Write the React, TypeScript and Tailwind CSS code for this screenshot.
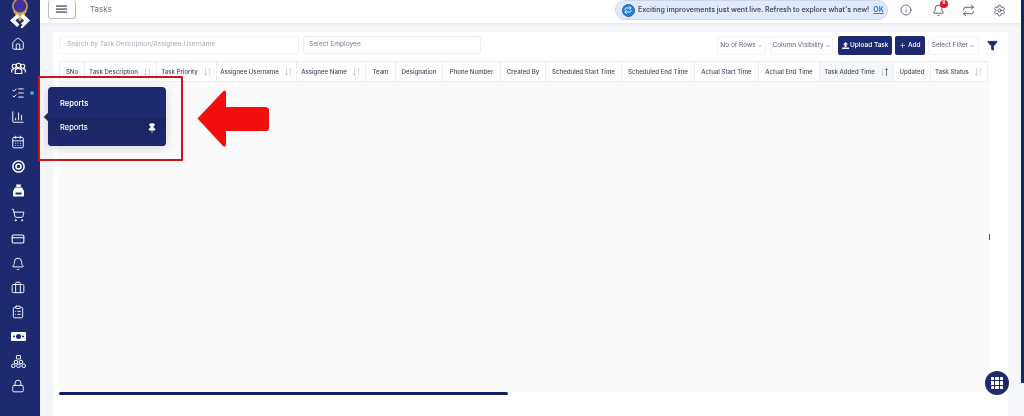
import React from "react";
import {
  Home, ListChecks, ChartColumn, CalendarDays, ShoppingCart, CreditCard, Bell, Briefcase, ClipboardList, Lock, Info, Repeat, Settings, Pin, Funnel, Plus, ChevronDown,
} from "lucide-react";

const S = 14;
const Users3 = () => (
  <svg width="15" height="13" viewBox="0 0 15 13" fill="none" stroke="currentColor" strokeWidth="1.1">
    <circle cx="3.2" cy="4.2" r="2" /><circle cx="7.5" cy="3.4" r="2.2" /><circle cx="11.8" cy="4.2" r="2" />
    <path d="M.7 10.500V8.800c0-1 1-1.900 2.400-1.900M4.200 11.500V8.800c0-1.300 1.400-2.400 3.300-2.400s3.300 1.100 3.300 2.400v2.700zM14.300 10.500V8.800c0-1-1-1.900-2.400-1.900" />
  </svg>
);
const Target = () => (
  <svg width="13" height="13" viewBox="0 0 13 13" fill="none" stroke="currentColor">
    <circle cx="6.500" cy="6.500" r="5.600" strokeWidth="1.500" /><circle cx="6.500" cy="6.500" r="2.500" strokeWidth="1.500" />
  </svg>
);
const Bag = () => (
  <svg width="13" height="13" viewBox="0 0 13 13" fill="currentColor">
    <path d="M4 0.500h5l-.5 2.500h-4zM3 3.500h7l2 3.500v4.500c0 .6-.4 1-1 1H2c-.6 0-1-.4-1-1V7z" />
    <rect x="3.500" y="8.500" width="6" height="2" fill="#1d2a6f" />
  </svg>
);
const Money = () => (
  <svg width="15" height="9" viewBox="0 0 15 9" fill="currentColor">
    <path fillRule="evenodd" d="M0 1c0-.5.500-1 1-1h13c.5 0 1 .500 1 1v7c0 .5-.5 1-1 1H1c-.5 0-1-.5-1-1zM7.500 2a2.500 2.500 0 100 5 2.500 2.500 0 000-5zM3 3.500a1 1 0 100 2 1 1 0 000-2zM12 3.500a1 1 0 100 2 1 1 0 000-2z" />
  </svg>
);
const Org = () => (
  <svg width="15" height="13" viewBox="0 0 15 13" fill="none" stroke="currentColor" strokeWidth="1">
    <rect x="5.500" y=".5" width="4" height="3.500" rx=".6" />
    <circle cx="5" cy="7" r="1.800" /><circle cx="10" cy="7" r="1.800" />
    <circle cx="2.300" cy="10.800" r="1.800" /><circle cx="7.500" cy="10.800" r="1.800" /><circle cx="12.700" cy="10.800" r="1.800" />
  </svg>
);

const sideIcons: React.ReactNode[] = [
  <Home size={S} strokeWidth={1.6} />, <Users3 />, <ListChecks size={S} strokeWidth={1.6} />, <ChartColumn size={S} strokeWidth={1.6} />,
  <CalendarDays size={S} strokeWidth={1.6} />, <Target />, <Bag />, <ShoppingCart size={S} strokeWidth={1.6} />,
  <CreditCard size={S} strokeWidth={1.8} />, <Bell size={S} strokeWidth={1.6} />, <Briefcase size={S} strokeWidth={1.6} />,
  <ClipboardList size={S} strokeWidth={1.6} />, <Money />, <Org />, <Lock size={S} strokeWidth={1.6} />,
];

const cols: [string, number, boolean][] = [
  ["SNo", 26, false], ["Task Description", 72, true], ["Task Priority", 60, true], ["Assignee Username", 80, true],
  ["Assignee Name", 69, true], ["Team", 30, false], ["Designation", 47, false], ["Phone Number", 58, false], ["Created By", 45, false],
  ["Scheduled Start Time", 76, false], ["Scheduled End Time", 73, false], ["Actual Start Time", 64, false], ["Actual End Time", 61, false],
  ["Task Added Time", 74, true], ["Updated", 37, false], ["Task Status", 57, true],
];

const Sort = ({ active }: { active?: boolean }) => (
  <svg width="9" height="8" viewBox="0 0 9 8" fill="none" strokeWidth=".8" className="ml-[5px] shrink-0">
    <path d="M2.500 0v7.300M1 5.800l1.500 1.600L4 5.800" stroke="#c4c7cf" />
    <path d="M6.500 8V.7M5 2.200L6.500.6 8 2.200" stroke={active ? "#4b5563" : "#d5d7dd"} />
  </svg>
);

const Ghost = ({ children, w }: { children: React.ReactNode; w: string }) => (
  <div className={`${w} h-[19px] flex items-center justify-center gap-[1px] bg-white rounded-[3px] border border-[#f1f2f5] text-[6.500px] text-[#5a6080]`}>
    {children}<ChevronDown size={6} strokeWidth={2} />
  </div>
);

export default function App() {
  return (
    <div className="relative flex w-[1024px] h-[416px] overflow-hidden bg-[#f4f5f8] blur-[0.35px]" style={{ fontFamily: "Inter, 'Liberation Sans', sans-serif" }}>
      <aside className="w-[40px] shrink-0 flex flex-col items-center text-white bg-[#1d2a6f]">
        <div className="h-[32px] w-full flex justify-center shrink-0">
          <svg width="30" height="32" viewBox="0 0 30 32">
            <path d="M15 22 L8 11 A8.500 8.500 0 0 1 22 11 Z" fill="#c9a24a" />
            <circle cx="15" cy="6" r="7.200" fill="#46309a" stroke="#c9a24a" strokeWidth="1.500" />
            <path d="M5 20.500L12 14l2.500 2.500-4 4 4 4-2.500 2.500z" fill="#fff" />
            <path d="M25 20.500L18 13.500l-3 3 4 4-3 3 1.500 1.500-2 2 1.500 1.500z" fill="#fff" />
          </svg>
        </div>
        {sideIcons.map((ic, i) => (
          <div key={i} className="relative h-[24.400px] w-full shrink-0 flex items-center justify-center pr-[4px]">
            {ic}
            {i === 2 && <span className="absolute left-[30px] top-[10px] w-[4px] h-[4px] rounded-full bg-[#2aa7c9]" />}
          </div>
        ))}
      </aside>

      <div className="flex-1 flex flex-col min-w-0">
        <header className="h-[23px] shrink-0 bg-white shadow-[0_1px_4px_rgba(0,0,0,0.08)] flex items-start pl-[8px] z-10">
          <button className="w-[28px] h-[19px] border border-[#b9bcc4] rounded-[3px] flex items-center justify-center border-t-0">
            <svg width="12" height="8" viewBox="0 0 12 8" fill="#2b3352"><rect width="11" height="1.100" y=".5" /><rect width="11" height="1.100" y="3.500" /><rect width="11" height="1.100" y="6.500" /></svg>
          </button>
          <span className="ml-[14px] mt-[3px] text-[8px] leading-[12px] text-[#6b7280]">Tasks</span>
          <div className="ml-[503px] w-[273px] h-[20px] rounded-full bg-[#e0eafa] border border-[#c9d8f1] flex items-center pl-[6px] text-[7px] whitespace-nowrap font-semibold text-[#4a5060] shrink-0">
            <span className="w-[13px] h-[13px] rounded-full bg-[#2f7fd6] border border-[#1e62b5] flex items-center justify-center shrink-0 mr-[3px]">
              <Repeat size={8} strokeWidth={2.500} color="#fff" />
            </span>
            <span>Exciting improvements just went live. Refresh to explore what's new!</span>
            <span className="ml-[4px] text-[#2f7fd6] underline font-bold">OK</span>
          </div>
          <div className="flex items-center h-[20px] text-[#3a4058] shrink-0">
            <Info size={12} className="ml-[12px]" strokeWidth={1.500} />
            <span className="relative ml-[20px] flex"><Bell size={13} strokeWidth={1.500} />
              <span className="absolute -right-[3px] -top-[4px] w-[8px] h-[8px] rounded-full bg-[#e5141f] text-[4.500px] text-white flex items-center justify-center font-bold">6</span>
            </span>
            <Repeat size={13} className="ml-[17px]" strokeWidth={1.500} />
            <Settings size={13} className="ml-[18px]" strokeWidth={1.500} />
          </div>
        </header>

        <div className="flex-1 flex pt-[9px] pl-[13px] min-h-0">
          <main className="w-[955px] h-[384px] bg-white flex flex-col pl-[6px] pr-[6px] pt-[4px]">
            <div className="flex h-[19px] items-start shrink-0">
              <div className="w-[240px] h-[18px] border border-[#f0f1f4] rounded-[3px] flex items-center pl-[7px] text-[6.500px] text-[#a8abb5]">Search by Task Description/Assignee Username</div>
              <div className="ml-[4px] w-[178px] h-[18px] border border-[#eceef1] rounded-[3px] flex items-center pl-[5px] text-[6.600px] text-[#777c88]">Select Employee</div>
              <div className="ml-auto flex">
                <Ghost w="w-[49px]">No of Rows</Ghost>
                <div className="ml-[4px]"><Ghost w="w-[63px]">Column Visibility</Ghost></div>
                <div className="ml-[5px] w-[54px] h-[19px] bg-[#1d2a6f] rounded-[2px] flex items-center justify-center gap-[1.500px] text-white text-[6.500px] font-medium">
                  <svg width="7" height="7" viewBox="0 0 7 7" fill="#fff"><path d="M3.500 0L6 2.500H4.500V5h-2V2.500H1zM0 5.500h7V7H0z" /></svg>
                  Upload Task
                </div>
                <div className="ml-[3px] w-[30px] h-[19px] bg-[#1d2a6f] rounded-[2px] flex items-center justify-center gap-[1.500px] text-white text-[6.500px] font-medium"><Plus size={7} strokeWidth={2} />Add</div>
                <div className="ml-[3px]"><Ghost w="w-[51px]">Select Filter</Ghost></div>
                <div className="ml-[3px] w-[20px] h-[19px] flex items-center justify-center"><Funnel size={11} fill="#1d2a6f" color="#1d2a6f" /></div>
              </div>
            </div>
            <div className="flex h-[21px] mt-[6px] shrink-0 w-[930px] border-y border-[#eceef1]">
              {cols.map(([name, w, sort], i) => (
                <div key={name} style={{ width: w }} className={`shrink-0 h-full border-r border-[#eceef1] flex items-center justify-center text-[6.100px] font-medium text-[#454a5c] whitespace-nowrap ${name === "Task Added Time" ? "bg-[#f7f8fa]" : ""} ${i === 0 ? "border-l" : ""}`}>
                  {name}
                  {sort && <Sort active={name === "Task Added Time"} />}
                </div>
              ))}
            </div>
            <div className="h-[310px] w-[930px] shrink-0 bg-[#fafafb]" />
            <div className="h-[3px] w-[449px] shrink-0 rounded-full bg-[#141f63]" />
          </main>
        </div>
      </div>

      <div className="w-[3px] shrink-0"><div className="h-[383px] w-[3px] bg-[#1a2564]" /></div>

      {/* overlays */}
      <span className="absolute left-[989px] top-[234px] w-[1px] h-[6px] bg-[#4b5563]" />
      <div className="absolute left-[38px] top-[76px] w-[145px] h-[85px] border-2 border-[#d3131c]" />
      <div className="absolute left-[48px] top-[87px] w-[118px] h-[59px] rounded-[4px] bg-[#1d2a6f] text-white text-[7.500px] font-semibold shadow-[0_2px_10px_rgba(0,0,0,0.15)]">
        <span className="absolute -left-[3px] top-[27px] w-[6px] h-[6px] rotate-45 bg-[#1d2a6f]" />
        <div className="relative h-[31px] flex items-center pl-[12px] pt-[3px]">Reports</div>
        <div className="relative h-[28px] flex items-center justify-between pl-[12px] pr-[9px] pb-[8px] rounded-b-[4px] bg-gradient-to-b from-[#1a2560] to-[#1d2a6f] font-medium">
          Reports<Pin size={10} fill="#fff" strokeWidth={2} />
        </div>
      </div>
      <svg className="absolute left-[196px] top-[89px]" width="75" height="60" viewBox="0 0 75 60">
        <path d="M1.500 29.500L27 2.500q2-2 3 .5V18h39q4 0 4 3v18q0 3-3 3H30v14q-1 3-3 1z" fill="#f40d0d" />
      </svg>
      <div className="absolute left-[985px] top-[371px] w-[24px] h-[24px] rounded-full bg-[#1d2a6f] grid grid-cols-3 gap-[1px] p-[6px]">
        {Array.from({ length: 9 }).map((_, i) => <span key={i} className="bg-white rounded-[0.500px]" />)}
      </div>
    </div>
  );
}
